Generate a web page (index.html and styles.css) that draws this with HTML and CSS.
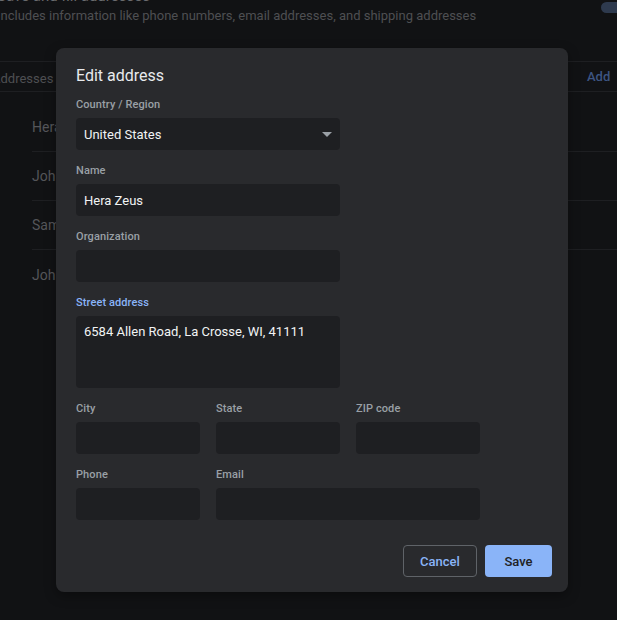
FILE: index.html
```html
<!DOCTYPE html>
<html lang="en">
<head>
<meta charset="utf-8">
<title>Edit address</title>
<link rel="stylesheet" href="styles.css">
</head>
<body>
<div class="page">
  <div class="pref-row">
    <div class="pref-text">
      <div class="pref-title">Save and fill addresses</div>
      <div class="pref-sub">Includes information like phone numbers, email addresses, and shipping addresses</div>
    </div>
    <div class="toggle"></div>
  </div>
  <div class="section-head">
    <span class="section-title">Addresses</span>
    <span class="add-btn">Add</span>
  </div>
  <ul class="addr-list">
    <li class="addr-row"><span>Hera Zeus, 6584 Allen Road</span><svg class="dots" viewBox="0 0 4 16" width="4" height="16"><circle cx="2" cy="2" r="1.8"/><circle cx="2" cy="8" r="1.8"/><circle cx="2" cy="14" r="1.8"/></svg></li>
    <li class="addr-row"><span>John Doe, 12 Main Street</span><svg class="dots" viewBox="0 0 4 16" width="4" height="16"><circle cx="2" cy="2" r="1.8"/><circle cx="2" cy="8" r="1.8"/><circle cx="2" cy="14" r="1.8"/></svg></li>
    <li class="addr-row"><span>Sam Smith, 44 Oak Avenue</span><svg class="dots" viewBox="0 0 4 16" width="4" height="16"><circle cx="2" cy="2" r="1.8"/><circle cx="2" cy="8" r="1.8"/><circle cx="2" cy="14" r="1.8"/></svg></li>
    <li class="addr-row"><span>John Roe, 9 Elm Court</span><svg class="dots" viewBox="0 0 4 16" width="4" height="16"><circle cx="2" cy="2" r="1.8"/><circle cx="2" cy="8" r="1.8"/><circle cx="2" cy="14" r="1.8"/></svg></li>
  </ul>
</div>

<div class="dialog" role="dialog" aria-label="Edit address">
  <h2 class="dialog-title">Edit address</h2>
  <div class="field wide">
    <label class="label">Country / Region</label>
    <div class="input select"><span>United States</span><svg class="arrow" viewBox="0 0 10 5" width="10" height="5"><path d="M0 0h10L5 5z"/></svg></div>
  </div>
  <div class="field wide">
    <label class="label">Name</label>
    <div class="input"><span>Hera Zeus</span></div>
  </div>
  <div class="field wide">
    <label class="label">Organization</label>
    <div class="input"></div>
  </div>
  <div class="field wide">
    <label class="label focused">Street address</label>
    <div class="input textarea"><span>6584 Allen Road, La Crosse, WI, 41111</span></div>
  </div>
  <div class="grid">
    <div class="field">
      <label class="label">City</label>
      <div class="input"></div>
    </div>
    <div class="field">
      <label class="label">State</label>
      <div class="input"></div>
    </div>
    <div class="field">
      <label class="label">ZIP code</label>
      <div class="input"></div>
    </div>
    <div class="field">
      <label class="label">Phone</label>
      <div class="input"></div>
    </div>
    <div class="field span2">
      <label class="label">Email</label>
      <div class="input"></div>
    </div>
  </div>
  <div class="actions">
    <button class="btn cancel">Cancel</button>
    <button class="btn save">Save</button>
  </div>
</div>
</body>
</html>
```
FILE: styles.css
```css
* { box-sizing: border-box; }

html, body {
  margin: 0;
  height: 100%;
}

body {
  background: #111214;
  font-family: Roboto, "Liberation Sans", sans-serif;
  overflow: hidden;
  position: relative;
}

/* background settings page (dimmed by scrim) */
.page {
  margin-left: -8px;
  width: 660px;
  color: #5c5d60;
  font-size: 13px;
}

.pref-row {
  display: flex;
  align-items: flex-start;
  justify-content: space-between;
  padding-left: 5px;
  margin-top: -13px;
  height: 74px;
}

.pref-title {
  font-size: 15px;
  line-height: 18px;
  color: #6a6b6e;
}

.pref-sub {
  font-size: 13px;
  line-height: 22px;
  color: #4e4f52;
}

.toggle {
  width: 30px;
  height: 11px;
  border-radius: 6px;
  background: #2e3a4e;
  margin-top: 15px;
  margin-right: 21px;
}

.section-head {
  display: flex;
  align-items: center;
  justify-content: space-between;
  height: 31px;
  border-top: 1px solid #1e1f22;
  border-bottom: 1px solid #1e1f22;
  padding-right: 17px;
}

.section-title {
  font-size: 13px;
  color: #4e4f52;
  padding-top: 4px;
}

.add-btn {
  color: #3d5582;
  font-weight: 500;
  font-size: 13px;
  width: 48px;
}

.addr-list {
  list-style: none;
  margin: 11px 0 0 40px;
  padding: 0;
}

.addr-row {
  display: flex;
  align-items: center;
  justify-content: space-between;
  height: 49px;
  border-bottom: 1px solid #1e1f22;
  font-size: 14px;
  color: #55565a;
  padding-right: 11px;
}

.addr-row:last-child { border-bottom: none; }

.dots { fill: #5a5b5e; }

/* dialog */
.dialog {
  position: absolute;
  left: 56px;
  top: 48px;
  width: 512px;
  height: 544px;
  background: #292a2d;
  border-radius: 8px;
  box-shadow: 0 4px 12px rgba(0, 0, 0, 0.35);
  padding: 17px 16px 15px 20px;
  display: flex;
  flex-direction: column;
}

.dialog-title {
  margin: 0 0 11px;
  font-size: 16px;
  line-height: 21px;
  font-weight: 400;
  color: #e8eaed;
}

.field {
  display: flex;
  flex-direction: column;
  margin-bottom: 13px;
}

.field.wide { width: 264px; }

.label {
  font-size: 11px;
  line-height: 16px;
  font-weight: 500;
  color: #9aa0a6;
  margin-bottom: 5px;
  letter-spacing: 0.1px;
}

.label.focused { color: #8ab4f8; }

.input {
  height: 32px;
  background: #1e1f22;
  border-radius: 4px;
  padding: 0 8px;
  display: flex;
  align-items: center;
  font-size: 13px;
  color: #f1f3f4;
}

.select { justify-content: space-between; }

.arrow { fill: #9aa0a6; }

.textarea {
  height: 72px;
  align-items: flex-start;
  padding-top: 8px;
}

.grid {
  display: grid;
  grid-template-columns: repeat(3, 124px);
  column-gap: 16px;
}

.span2 { grid-column: span 2; }

.actions {
  margin-top: auto;
  display: flex;
  justify-content: flex-end;
  gap: 8px;
}

.btn {
  height: 32px;
  border-radius: 4px;
  font-family: Roboto, "Liberation Sans", sans-serif;
  font-size: 13px;
  font-weight: 500;
  cursor: pointer;
}

.cancel {
  width: 74px;
  background: transparent;
  border: 1px solid #5f6368;
  color: #8ab4f8;
}

.save {
  width: 67px;
  background: #8ab4f8;
  border: none;
  color: #202124;
}
```
